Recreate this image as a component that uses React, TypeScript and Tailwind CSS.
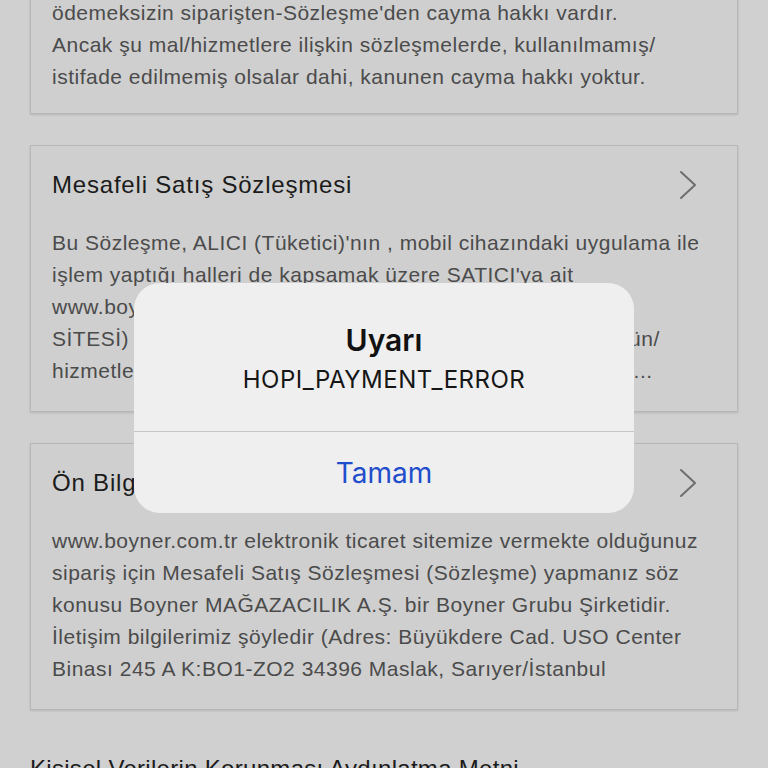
const bodyFont = { fontFamily: '"Liberation Sans", "Noto Sans", sans-serif' }

function Lines({ lines }: { lines: string[] }) {
  return (
    <p className="text-[21px] leading-[32px] tracking-[0.5px] text-[#4b4b4b]">
      {lines.map((line, index) => (
        <span key={index} className="block whitespace-nowrap">{line}</span>
      ))}
    </p>
  )
}

function Chevron() {
  return (
    <svg width="20" height="30" viewBox="0 0 20 30" fill="none" className="mr-[18px] shrink-0" aria-hidden="true">
      <path d="M3 2 L17 15 L3 28" stroke="#6e6e6e" strokeWidth="2" strokeLinecap="round" strokeLinejoin="round" />
    </svg>
  )
}

function ContractCard({ title, lines }: { title: string; lines: string[] }) {
  return (
    <section className="border border-[#b7b7b7] bg-[#cfcfcf] px-[21px] pt-[23px] pb-[24px] shadow-[0_1px_2px_rgba(0,0,0,0.12)]">
      <div className="flex items-center justify-between">
        <h2 className="text-[24px] leading-[32px] tracking-[0.8px] text-[#1b1b1b]">{title}</h2>
        <Chevron />
      </div>
      <div className="mt-[26px]">
        <Lines lines={lines} />
      </div>
    </section>
  )
}

export default function App() {
  return (
    <div className="relative h-[768px] w-[768px] overflow-hidden bg-[#d0d0d0]" style={bodyFont}>
      <div className="flex flex-col gap-[31px] px-[30px]">
        <section className="-mt-[3px] border border-t-0 border-[#b7b7b7] bg-[#cfcfcf] px-[21px] pb-[20px] shadow-[0_1px_2px_rgba(0,0,0,0.12)]">
          <Lines
            lines={[
              'ödemeksizin siparişten-Sözleşme\'den cayma hakkı vardır.',
              'Ancak şu mal/hizmetlere ilişkin sözleşmelerde, kullanılmamış/',
              'istifade edilmemiş olsalar dahi, kanunen cayma hakkı yoktur.',
            ]}
          />
        </section>

        <ContractCard
          title="Mesafeli Satış Sözleşmesi"
          lines={[
            'Bu Sözleşme, ALICI (Tüketici)\'nın , mobil cihazındaki uygulama ile',
            'işlem yaptığı halleri de kapsamak üzere SATICI\'ya ait',
            'www.boyner.com.tr alan adlı web sitesinden (İNTERNET',
            'SİTESİ) satın alımını yaptığı, aşağıda nitelikleri belirtilen ürün/',
            'hizmetlerin satışı ve teslimi ile ilgili olarak tarafların hususla...',
          ]}
        />

        <ContractCard
          title="Ön Bilgilendirme Formu"
          lines={[
            'www.boyner.com.tr elektronik ticaret sitemize vermekte olduğunuz',
            'sipariş için Mesafeli Satış Sözleşmesi (Sözleşme) yapmanız söz',
            'konusu Boyner MAĞAZACILIK A.Ş. bir Boyner Grubu Şirketidir.',
            'İletişim bilgilerimiz şöyledir (Adres: Büyükdere Cad. USO Center',
            'Binası 245 A K:BO1-ZO2 34396 Maslak, Sarıyer/İstanbul',
          ]}
        />

        <h2 className="mt-[12px] text-[24px] leading-[32px] tracking-[0.3px] text-[#1b1b1b]">Kişisel Verilerin Korunması Aydınlatma Metni</h2>
      </div>

      <div
        role="alertdialog"
        className="absolute top-[283px] left-[134px] w-[500px] overflow-hidden rounded-[26px] bg-[#efefef]"
        style={{ fontFamily: 'Inter, Roboto, "Noto Sans", sans-serif' }}
      >
        <div className="flex flex-col items-center pt-[39px] pb-[36px]">
          <h3 className="text-[30px] leading-[36px] font-semibold text-[#111]">Uyarı</h3>
          <p className="mt-[7px] text-[24px] leading-[30px] tracking-[0.5px] text-[#161616]">HOPI_PAYMENT_ERROR</p>
        </div>
        <div className="h-px bg-[#c4c4c4]" />
        <button type="button" className="flex h-[81px] w-full items-center justify-center text-[28px] text-[#1f4dcc]">
          Tamam
        </button>
      </div>
    </div>
  )
}
